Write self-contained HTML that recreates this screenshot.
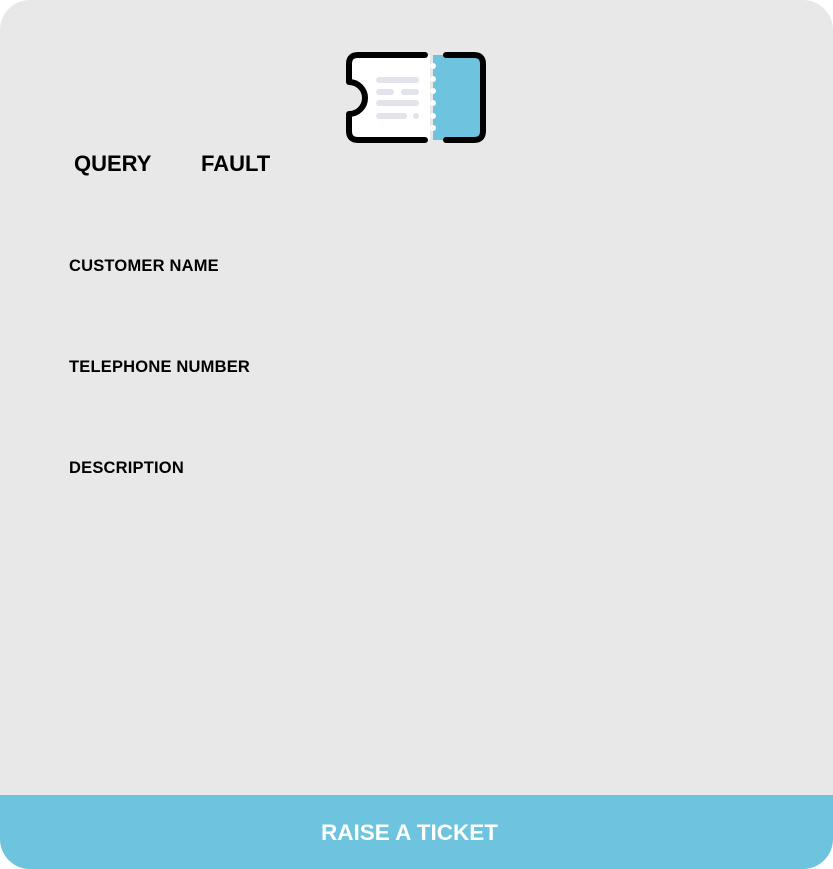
<!DOCTYPE html>
<html><head><style>
html,body{margin:0;padding:0;width:833px;height:869px;background:#fff;overflow:hidden}
.card{position:absolute;left:0;top:0;width:833px;height:869px;background:#e8e8e8;border-radius:30px;overflow:hidden;font-family:"Liberation Sans",sans-serif;color:#000}
.t{position:absolute;font-weight:bold;white-space:nowrap}
.tab{font-size:22px;top:151px}
.lbl{font-size:16.5px;letter-spacing:0.2px}
.btn{position:absolute;left:0;top:795px;width:833px;height:74px;background:#6ec4de;color:#fff;font-weight:bold;font-size:22.5px;line-height:76px;text-align:center;text-indent:-14px}
</style></head><body>
<div class="card">
<svg style="position:absolute;left:0;top:0" width="833" height="200">
  <path d="M430,55 H358 Q349,55 349,64 V82 A16 16 0 0 1 349,114 V131 Q349,140 358,140 H430 Z" fill="#fff"/>
  <path d="M433,55 H474 Q483,55 483,64 V131 Q483,140 474,140 H433 Z" fill="#6ec4de"/>
  <g fill="#fff">
    <circle cx="433" cy="66" r="3"/><circle cx="433" cy="79" r="3"/><circle cx="433" cy="91" r="3"/>
    <circle cx="433" cy="103" r="3"/><circle cx="433" cy="116" r="3"/><circle cx="433" cy="128" r="3"/>
  </g>
  <g stroke="#e3e3ec" stroke-width="6" stroke-linecap="round">
    <line x1="379" y1="80" x2="416" y2="80"/>
    <line x1="379" y1="92" x2="391" y2="92"/><line x1="404" y1="92" x2="416" y2="92"/>
    <line x1="379" y1="103" x2="416" y2="103"/>
    <line x1="379" y1="116" x2="404" y2="116"/>
  </g>
  <circle cx="416" cy="116" r="3" fill="#e3e3ec"/>
  <g fill="none" stroke="#000" stroke-width="6" stroke-linecap="round" stroke-linejoin="round">
    <path d="M425,55 H358 Q349,55 349,64 V82 A16 16 0 0 1 349,114 V131 Q349,140 358,140 H425"/>
    <path d="M446,55 H474 Q483,55 483,64 V131 Q483,140 474,140 H446"/>
  </g>
</svg>
<div class="t tab" style="left:74px">QUERY</div>
<div class="t tab" style="left:201px">FAULT</div>
<div class="t lbl" style="left:69px;top:257px">CUSTOMER NAME</div>
<div class="t lbl" style="left:69px;top:358px">TELEPHONE NUMBER</div>
<div class="t lbl" style="left:69px;top:459px">DESCRIPTION</div>
<div class="btn">RAISE A TICKET</div>
</div>
</body></html>
